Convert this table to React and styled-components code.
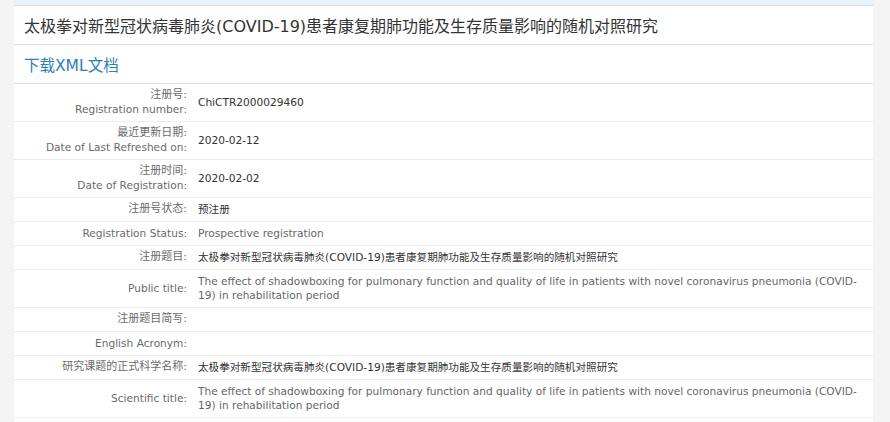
import React from "react";
import styled, { createGlobalStyle } from "styled-components";

const GlobalStyle = createGlobalStyle`
  html, body {
    margin: 0;
    padding: 0;
    background: #f4f4f4;
    overflow: hidden;
  }
  body {
    font-family: "DejaVu Sans", Verdana, "Noto Sans CJK SC", sans-serif;
  }
`;

const Page = styled.div`
  width: 859px;
  min-height: 100vh;
  margin-left: 14px;
  background: #fff;
`;

const TopStrip = styled.div`
  height: 5px;
  background: #eaf2f9;
  border-bottom: 1px solid #dcdcdc;
`;

const HeadRow = styled.div`
  display: flex;
  align-items: center;
  height: 38px;
  padding-left: 10px;
  border-bottom: 1px solid #dedede;
  font-size: ${(p) => (p.$link ? "15.5px" : "16px")};
  color: ${(p) => (p.$link ? "#2f7dba" : "#333")};
  font-family: "DejaVu Sans", "Noto Sans CJK SC", sans-serif;
`;

const Table = styled.div`
  display: grid;
  grid-template-columns: 178px 1fr;
`;

const Row = styled.div`
  display: contents;
`;

const LabelCell = styled.div`
  display: flex;
  flex-direction: column;
  justify-content: center;
  align-items: flex-end;
  padding: 4px 5px 5px 0;
  border-bottom: 1px solid #ececec;
  color: #6a6a6a;
  text-align: right;
`;

const ValueCell = styled.div`
  display: flex;
  flex-direction: column;
  justify-content: center;
  padding: 4px 12px 5px 6px;
  border-bottom: 1px solid #ececec;
  color: ${(p) => (p.$dark ? "#333" : "#666")};
`;

const Line = styled.span`
  display: block;
  line-height: 14px;
  font-size: ${(p) => (p.$lang === "cn" ? (p.$value ? "10.6px" : "11px") : "10.6px")};
  white-space: ${(p) => (p.$value ? "normal" : "nowrap")};
`;

const cnTitle =
  "太极拳对新型冠状病毒肺炎(COVID-19)患者康复期肺功能及生存质量影响的随机对照研究";
const enTitle =
  "The effect of shadowboxing for pulmonary function and quality of life in patients with novel coronavirus pneumonia (COVID-19) in rehabilitation period";

const rows = [
  {
    labels: [
      ["cn", "注册号:"],
      ["en", "Registration number:"],
    ],
    value: "ChiCTR2000029460",
    lang: "en",
    dark: true,
  },
  {
    labels: [
      ["cn", "最近更新日期:"],
      ["en", "Date of Last Refreshed on:"],
    ],
    value: "2020-02-12",
    lang: "en",
    dark: true,
  },
  {
    labels: [
      ["cn", "注册时间:"],
      ["en", "Date of Registration:"],
    ],
    value: "2020-02-02",
    lang: "en",
    dark: true,
  },
  { labels: [["cn", "注册号状态:"]], value: "预注册", lang: "cn", dark: true },
  {
    labels: [["en", "Registration Status:"]],
    value: "Prospective registration",
    lang: "en",
  },
  { labels: [["cn", "注册题目:"]], value: cnTitle, lang: "cn", dark: true },
  { labels: [["en", "Public title:"]], value: enTitle, lang: "en" },
  { labels: [["cn", "注册题目简写:"]], value: "", lang: "cn" },
  { labels: [["en", "English Acronym:"]], value: "", lang: "en" },
  {
    labels: [["cn", "研究课题的正式科学名称:"]],
    value: cnTitle,
    lang: "cn",
    dark: true,
  },
  { labels: [["en", "Scientific title:"]], value: enTitle, lang: "en" },
];

export default function App() {
  return (
    <>
      <GlobalStyle />
      <Page>
        <TopStrip />
        <HeadRow>{cnTitle}</HeadRow>
        <HeadRow $link>下载XML文档</HeadRow>
        <Table>
          {rows.map((row, i) => (
            <Row key={i}>
              <LabelCell>
                {row.labels.map(([lang, text]) => (
                  <Line key={text} $lang={lang}>
                    {text}
                  </Line>
                ))}
              </LabelCell>
              <ValueCell $dark={row.dark}>
                <Line $lang={row.lang} $value>
                  {row.value || "\u00a0"}
                </Line>
              </ValueCell>
            </Row>
          ))}
        </Table>
      </Page>
    </>
  );
}
